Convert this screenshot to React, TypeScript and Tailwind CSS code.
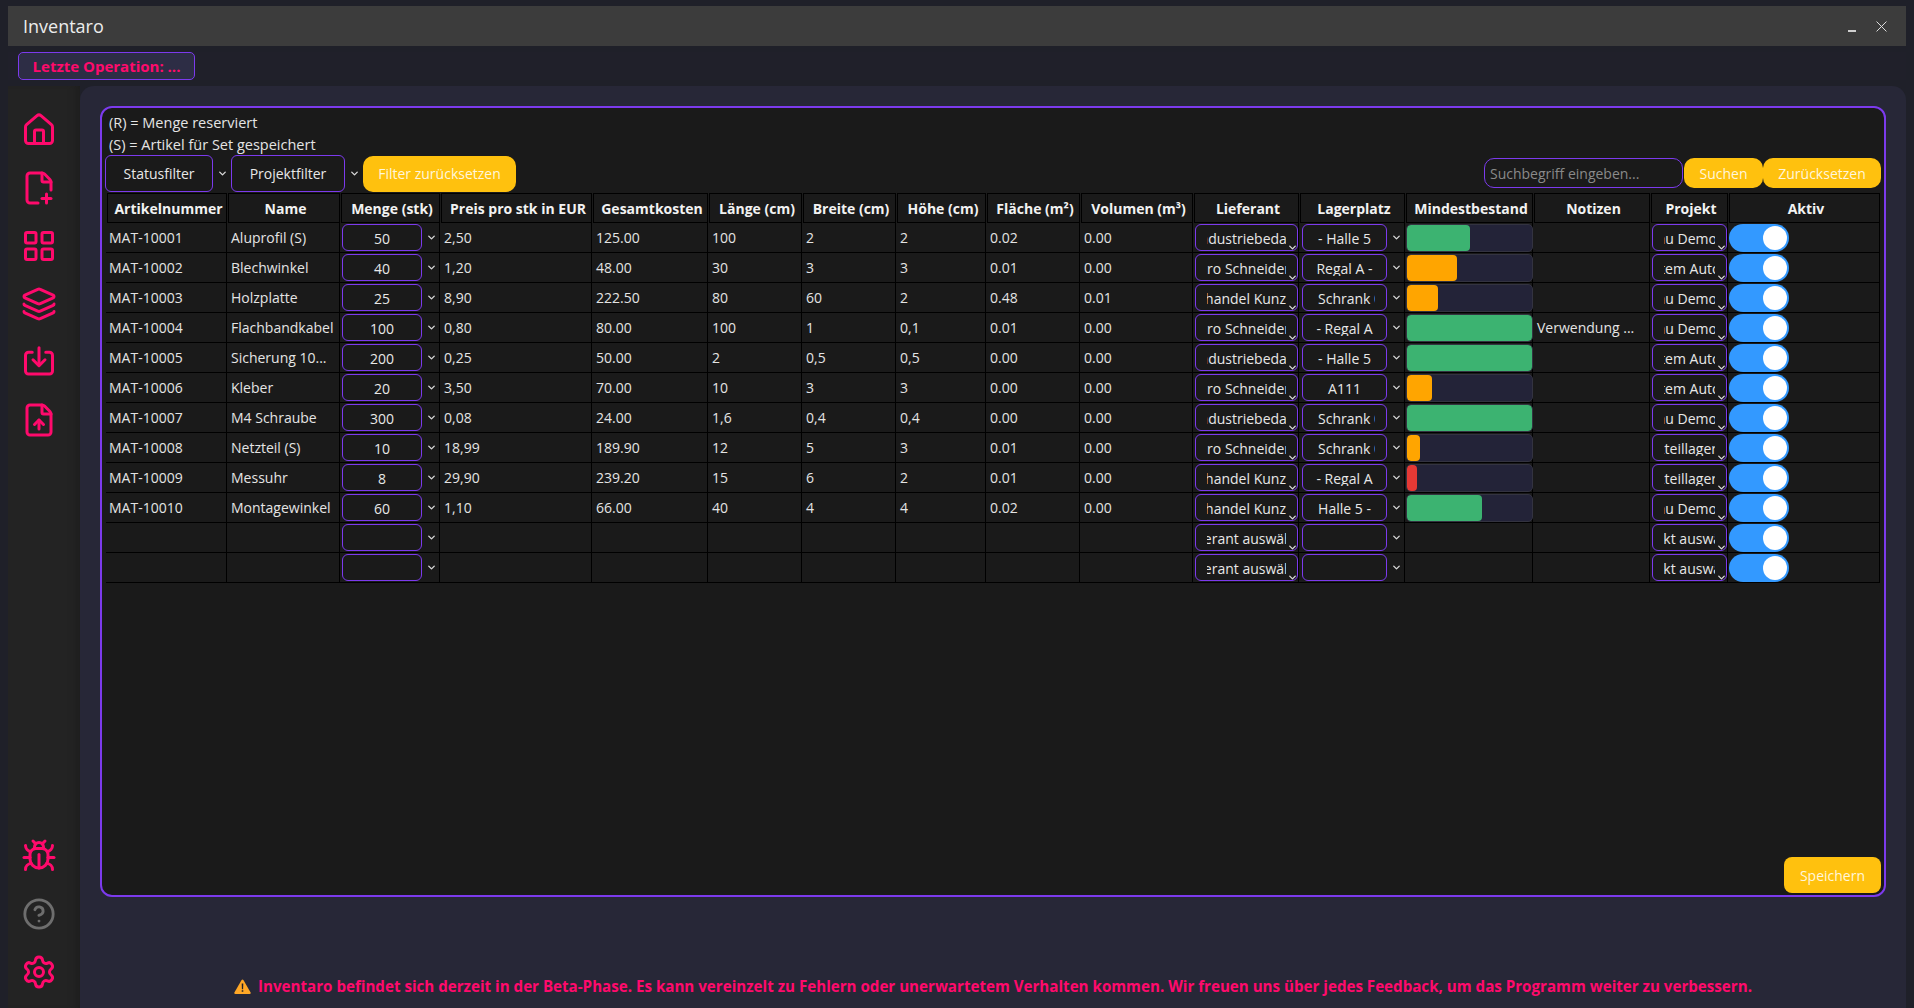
import { useState } from "react";
import {
  Bug,
  ChevronDown,
  CircleHelp,
  FilePlus2,
  FileUp,
  House,
  Layers,
  LayoutGrid,
  Settings,
} from "lucide-react";

type Article = {
  id: string;
  name: string;
  qty: string;
  price: string;
  total: string;
  length: string;
  width: string;
  height: string;
  area: string;
  volume: string;
  supplier: string;
  place: string;
  notes: string;
  project: string;
};

const supplierA = "Industriebedarf";
const supplierB = "Elektro Schneider e.K.";
const supplierC = "Großhandel Kunz OHG";
const projectA = "Aufbau Demo-Linie";
const projectB = "Prüfsystem Automation";
const projectC = "Ersatzteillager Nord";

const articles: Article[] = [
  { id: "MAT-10001", name: "Aluprofil (S)", qty: "50", price: "2,50", total: "125.00", length: "100", width: "2", height: "2", area: "0.02", volume: "0.00", supplier: supplierA, place: "- Halle 5", notes: "", project: projectA },
  { id: "MAT-10002", name: "Blechwinkel", qty: "40", price: "1,20", total: "48.00", length: "30", width: "3", height: "3", area: "0.01", volume: "0.00", supplier: supplierB, place: "Regal A -", notes: "", project: projectB },
  { id: "MAT-10003", name: "Holzplatte", qty: "25", price: "8,90", total: "222.50", length: "80", width: "60", height: "2", area: "0.48", volume: "0.01", supplier: supplierC, place: "Schrank 0", notes: "", project: projectA },
  { id: "MAT-10004", name: "Flachbandkabel", qty: "100", price: "0,80", total: "80.00", length: "100", width: "1", height: "0,1", area: "0.01", volume: "0.00", supplier: supplierB, place: "- Regal A", notes: "Verwendung ...", project: projectA },
  { id: "MAT-10005", name: "Sicherung 10...", qty: "200", price: "0,25", total: "50.00", length: "2", width: "0,5", height: "0,5", area: "0.00", volume: "0.00", supplier: supplierA, place: "- Halle 5", notes: "", project: projectB },
  { id: "MAT-10006", name: "Kleber", qty: "20", price: "3,50", total: "70.00", length: "10", width: "3", height: "3", area: "0.00", volume: "0.00", supplier: supplierB, place: "A111", notes: "", project: projectB },
  { id: "MAT-10007", name: "M4 Schraube", qty: "300", price: "0,08", total: "24.00", length: "1,6", width: "0,4", height: "0,4", area: "0.00", volume: "0.00", supplier: supplierA, place: "Schrank 0", notes: "", project: projectA },
  { id: "MAT-10008", name: "Netzteil (S)", qty: "10", price: "18,99", total: "189.90", length: "12", width: "5", height: "3", area: "0.01", volume: "0.00", supplier: supplierB, place: "Schrank 0", notes: "", project: projectC },
  { id: "MAT-10009", name: "Messuhr", qty: "8", price: "29,90", total: "239.20", length: "15", width: "6", height: "2", area: "0.01", volume: "0.00", supplier: supplierC, place: "- Regal A", notes: "", project: projectC },
  { id: "MAT-10010", name: "Montagewinkel", qty: "60", price: "1,10", total: "66.00", length: "40", width: "4", height: "4", area: "0.02", volume: "0.00", supplier: supplierC, place: "Halle 5 -", notes: "", project: projectA },
];

const emptyRows = [0, 1];

const chevron = "h-[11px] w-[11px] text-[#d8d8d8]";

function ImportIcon({ className }: { className: string }) {
  return (
    <svg viewBox="0 0 24 24" fill="none" stroke="currentColor" strokeWidth="2" strokeLinecap="round" strokeLinejoin="round" className={className}>
      <path d="M7.5 5.5H5a2 2 0 0 0-2 2V18a2 2 0 0 0 2 2h14a2 2 0 0 0 2-2V7.5a2 2 0 0 0-2-2h-2.5" />
      <path d="M12 2.5V14" />
      <path d="m8 10.5 4 4 4-4" />
    </svg>
  );
}

function SideIcon({ children }: { children: React.ReactNode }) {
  return <div className="flex h-[58px] w-[62px] items-center justify-center">{children}</div>;
}

function Sidebar() {
  const icon = "h-[36px] w-[36px] text-[#ff0a6c]";
  return (
    <aside className="flex w-[72px] shrink-0 flex-col justify-between bg-[#232323] pt-[15px] pb-[7px] shadow-[inset_-10px_0_10px_-8px_#1c1c1c]">
      <div>
        <SideIcon><House className={icon} strokeWidth={2} /></SideIcon>
        <SideIcon><FilePlus2 className={icon} strokeWidth={2} /></SideIcon>
        <SideIcon><LayoutGrid className={icon} strokeWidth={2} /></SideIcon>
        <SideIcon><Layers className={icon} strokeWidth={2} /></SideIcon>
        <SideIcon><ImportIcon className={icon} /></SideIcon>
        <SideIcon><FileUp className={icon} strokeWidth={2} /></SideIcon>
      </div>
      <div>
        <SideIcon><Bug className={icon} strokeWidth={2} /></SideIcon>
        <SideIcon><CircleHelp className="h-[34px] w-[34px] text-[#6e6e6e]" strokeWidth={2} /></SideIcon>
        <SideIcon><Settings className={icon} strokeWidth={2} /></SideIcon>
      </div>
    </aside>
  );
}

function HeaderCell({ children }: { children: React.ReactNode }) {
  return (
    <th className="p-0 font-bold">
      <div className="ml-px flex h-[30px] items-center justify-center border border-black pl-[3px] text-[14px] whitespace-nowrap text-[#f2f2f2]">
        {children}
      </div>
    </th>
  );
}

function TextCell({ children }: { children?: React.ReactNode }) {
  return (
    <td className="h-[30px] truncate border-r border-b border-black py-0 pr-0 pl-[4px] text-[14px] text-[#e4e4e4] first:pl-[3px]">
      {children}
    </td>
  );
}

function QtyBox({ value }: { value: string }) {
  return (
    <div className="flex h-[29px] items-center pl-[2px]">
      <div className="flex h-[27px] w-[80px] items-center justify-center rounded-[6px] border-[1.5px] border-[#7c3aed] pt-[2px] text-[14px] text-[#e8e8e8]">
        {value}
      </div>
      <ChevronDown className={`ml-[4px] ${chevron}`} strokeWidth={3} />
    </div>
  );
}

function ClippedCombo({ value, width }: { value: string; width: string }) {
  return (
    <div className={`relative ml-[2px] h-[27px] rounded-[6px] border-[1.5px] border-[#7c3aed] px-[11px] ${width}`}>
      <div className="mt-[4px] flex h-[17px] justify-center overflow-hidden text-[14px] leading-[19px] whitespace-nowrap text-[#e8e8e8]">
        <span className="shrink-0">{value}</span>
      </div>
      <ChevronDown className={`absolute -right-px -bottom-[3px] ${chevron}`} strokeWidth={3} />
    </div>
  );
}

function PlaceBox({ value }: { value: string }) {
  const align = value.startsWith("Schrank") ? "justify-start pl-[4px]" : "justify-center";
  return (
    <div className="flex h-[29px] items-center pl-[3px]">
      <div className="h-[27px] w-[85px] rounded-[6px] border-[1.5px] border-[#7c3aed] px-[11px]">
        <div className={`mt-[4px] flex h-[17px] overflow-hidden text-[14px] leading-[19px] whitespace-nowrap text-[#e8e8e8] ${align}`}>
          <span className="shrink-0">{value}</span>
        </div>
      </div>
      <ChevronDown className={`ml-[4px] ${chevron}`} strokeWidth={3} />
    </div>
  );
}

function StockBar({ qty }: { qty: number }) {
  const percent = Math.min(qty, 100);
  const color = percent >= 50 ? "bg-[#3cb371]" : percent >= 10 ? "bg-[#ffa500]" : "bg-[#e53935]";
  return (
    <div className="ml-px h-[28px] w-[127px] overflow-hidden rounded-[5px] border border-[#333340] bg-[#232338]">
      <div className={`h-full rounded-[4px] ${color}`} style={{ width: `${percent}%` }} />
    </div>
  );
}

function ActiveToggle() {
  const [active, setActive] = useState(true);
  return (
    <button
      type="button"
      onClick={() => setActive(!active)}
      className={`ml-px flex h-[28px] w-[60px] items-center rounded-full pr-[2px] pl-[2px] ${active ? "justify-end bg-[#3399ff]" : "justify-start bg-[#555555]"}`}
    >
      <span className="h-[24px] w-[24px] rounded-full bg-white" />
    </button>
  );
}

function ArticleTable() {
  return (
    <table className="w-[1774px] table-fixed border-separate border-spacing-0">
      <colgroup>
        <col className="w-[121px]" />
        <col className="w-[113px]" />
        <col className="w-[100px]" />
        <col className="w-[152px]" />
        <col className="w-[116px]" />
        <col className="w-[94px]" />
        <col className="w-[94px]" />
        <col className="w-[90px]" />
        <col className="w-[94px]" />
        <col className="w-[113px]" />
        <col className="w-[106px]" />
        <col className="w-[106px]" />
        <col className="w-[128px]" />
        <col className="w-[117px]" />
        <col className="w-[78px]" />
        <col className="w-[152px]" />
      </colgroup>
      <thead>
        <tr>
          <HeaderCell>Artikelnummer</HeaderCell>
          <HeaderCell>Name</HeaderCell>
          <HeaderCell>Menge (stk)</HeaderCell>
          <HeaderCell>Preis pro stk in EUR</HeaderCell>
          <HeaderCell>Gesamtkosten</HeaderCell>
          <HeaderCell>Länge (cm)</HeaderCell>
          <HeaderCell>Breite (cm)</HeaderCell>
          <HeaderCell>Höhe (cm)</HeaderCell>
          <HeaderCell>Fläche (m²)</HeaderCell>
          <HeaderCell>Volumen (m³)</HeaderCell>
          <HeaderCell>Lieferant</HeaderCell>
          <HeaderCell>Lagerplatz</HeaderCell>
          <HeaderCell>Mindestbestand</HeaderCell>
          <HeaderCell>Notizen</HeaderCell>
          <HeaderCell>Projekt</HeaderCell>
          <HeaderCell>Aktiv</HeaderCell>
        </tr>
      </thead>
      <tbody>
        {articles.map((article) => (
          <tr key={article.id}>
            <TextCell>{article.id}</TextCell>
            <TextCell>{article.name}</TextCell>
            <td className="border-r border-b border-black p-0"><QtyBox value={article.qty} /></td>
            <TextCell>{article.price}</TextCell>
            <TextCell>{article.total}</TextCell>
            <TextCell>{article.length}</TextCell>
            <TextCell>{article.width}</TextCell>
            <TextCell>{article.height}</TextCell>
            <TextCell>{article.area}</TextCell>
            <TextCell>{article.volume}</TextCell>
            <td className="border-r border-b border-black p-0"><ClippedCombo value={article.supplier} width="w-[103px]" /></td>
            <td className="border-r border-b border-black p-0"><PlaceBox value={article.place} /></td>
            <td className="border-r border-b border-black p-0"><StockBar qty={Number(article.qty)} /></td>
            <TextCell>{article.notes}</TextCell>
            <td className="border-r border-b border-black p-0"><ClippedCombo value={article.project} width="w-[75px]" /></td>
            <td className="border-r border-b border-black p-0"><ActiveToggle /></td>
          </tr>
        ))}
        {emptyRows.map((row) => (
          <tr key={row}>
            <TextCell />
            <TextCell />
            <td className="border-r border-b border-black p-0"><QtyBox value="" /></td>
            <TextCell />
            <TextCell />
            <TextCell />
            <TextCell />
            <TextCell />
            <TextCell />
            <TextCell />
            <td className="border-r border-b border-black p-0"><ClippedCombo value="Lieferant auswählen" width="w-[103px]" /></td>
            <td className="border-r border-b border-black p-0"><PlaceBox value="" /></td>
            <TextCell />
            <TextCell />
            <td className="border-r border-b border-black p-0"><ClippedCombo value="Projekt auswählen" width="w-[75px]" /></td>
            <td className="border-r border-b border-black p-0"><ActiveToggle /></td>
          </tr>
        ))}
      </tbody>
    </table>
  );
}

function FilterButton({ label, width }: { label: string; width: string }) {
  return (
    <>
      <button type="button" className={`h-[37px] rounded-[6px] border-[1.5px] border-[#7c3aed] text-[14px] text-[#e8e8e8] ${width}`}>
        {label}
      </button>
      <ChevronDown className={`mx-[3.5px] ${chevron}`} strokeWidth={3} />
    </>
  );
}

export default function App() {
  return (
    <div className="flex h-screen flex-col overflow-hidden bg-[#1f2029] px-2 pt-[6px] font-['Open_Sans','Noto_Sans',sans-serif] text-[#e4e4e4]">
      <header className="flex h-10 shrink-0 items-center justify-between bg-[#3c3c3c] pr-[19px] pl-[15px]">
        <span className="pt-px text-[18px] text-[#ececec]">Inventaro</span>
        <div className="flex items-center gap-[20px]">
          <span className="mt-[10px] h-[2px] w-[8px] bg-[#d0d0d0]" />
          <svg viewBox="0 0 10 10" className="h-[11px] w-[11px] text-[#e0e0e0]" stroke="currentColor" strokeWidth="0.9">
            <path d="M0.5 0.5 9.5 9.5M9.5 0.5 0.5 9.5" />
          </svg>
        </div>
      </header>

      <div className="mt-[6px] mb-[6px] h-[28px] shrink-0 bg-[#20202a] pl-[10px]">
        <div className="flex h-[28px] w-[177px] items-center justify-center rounded-[5px] border-[1.5px] border-[#7c3aed] bg-[#2d2d45] text-[15px] font-bold text-[#ff0a6c]">
          Letzte Operation: ...
        </div>
      </div>

      <div className="flex min-h-0 flex-1">
        <Sidebar />
        <main className="flex min-w-0 flex-1 flex-col rounded-t-[14px] bg-[#272737] pt-[20px] pr-[20px] pl-[20px]">
          <section className="flex h-[791px] shrink-0 flex-col rounded-[12px] border-2 border-[#7c3aed] bg-[#1a1a1a] pt-[4px] pr-[2px] pl-[4px]">
            <div className="pl-[3px] text-[14.5px] leading-[22px] text-[#e4e4e4]">
              <p>(R) = Menge reserviert</p>
              <p>(S) = Artikel für Set gespeichert</p>
            </div>
            <div className="-mt-px flex h-[38px] items-start justify-between pr-px">
              <div className="-ml-px flex items-center">
                <FilterButton label="Statusfilter" width="w-[108px]" />
                <FilterButton label="Projektfilter" width="w-[114px]" />
                <button type="button" className="h-[36px] w-[153px] rounded-[10px] bg-[#ffc10e] text-[14px] text-[#fff6dc]">
                  Filter zurücksetzen
                </button>
              </div>
              <div className="mt-[3px] flex items-center">
                <input
                  placeholder="Suchbegriff eingeben..."
                  className="h-[30px] w-[199px] rounded-[10px] border-[1.5px] border-[#7c3aed] bg-transparent px-[5px] text-[14px] outline-none placeholder:text-[#8a8a8a]"
                />
                <button type="button" className="ml-px h-[30px] w-[79px] rounded-[10px] bg-[#ffc10e] text-[14px] text-[#fff6dc]">
                  Suchen
                </button>
                <button type="button" className="h-[30px] w-[118px] rounded-[10px] bg-[#ffc10e] text-[14px] text-[#fff6dc]">
                  Zurücksetzen
                </button>
              </div>
            </div>
            <ArticleTable />
            <div className="mt-auto mb-[2px] flex justify-end pr-px">
              <button type="button" className="h-[36px] w-[97px] rounded-[8px] bg-[#ffc10e] text-[14px] text-[#fff6dc]">
                Speichern
              </button>
            </div>
          </section>
          <footer className="flex flex-1 items-center justify-center gap-[7px] pt-[67px] text-[15.15px] font-bold text-[#ff0a6c]">
            <svg viewBox="0 0 17 15" className="h-[15px] w-[17px]">
              <path d="M8.5 0.6c.4 0 .7.2.9.5l7.2 12.4c.4.7 0 1.5-.9 1.5H1.3c-.9 0-1.3-.8-.9-1.5L7.6 1.1c.2-.3.5-.5.9-.5z" fill="#ffa726" />
              <path d="M7.7 4.6h1.6l-.2 5.6H7.9zM7.7 11.2h1.6v1.6H7.7z" fill="#1f2029" />
            </svg>
            <span>
              Inventaro befindet sich derzeit in der Beta-Phase. Es kann vereinzelt zu Fehlern oder unerwartetem Verhalten kommen. Wir freuen uns über jedes Feedback, um das Programm weiter zu verbessern.
            </span>
          </footer>
        </main>
      </div>
    </div>
  );
}
